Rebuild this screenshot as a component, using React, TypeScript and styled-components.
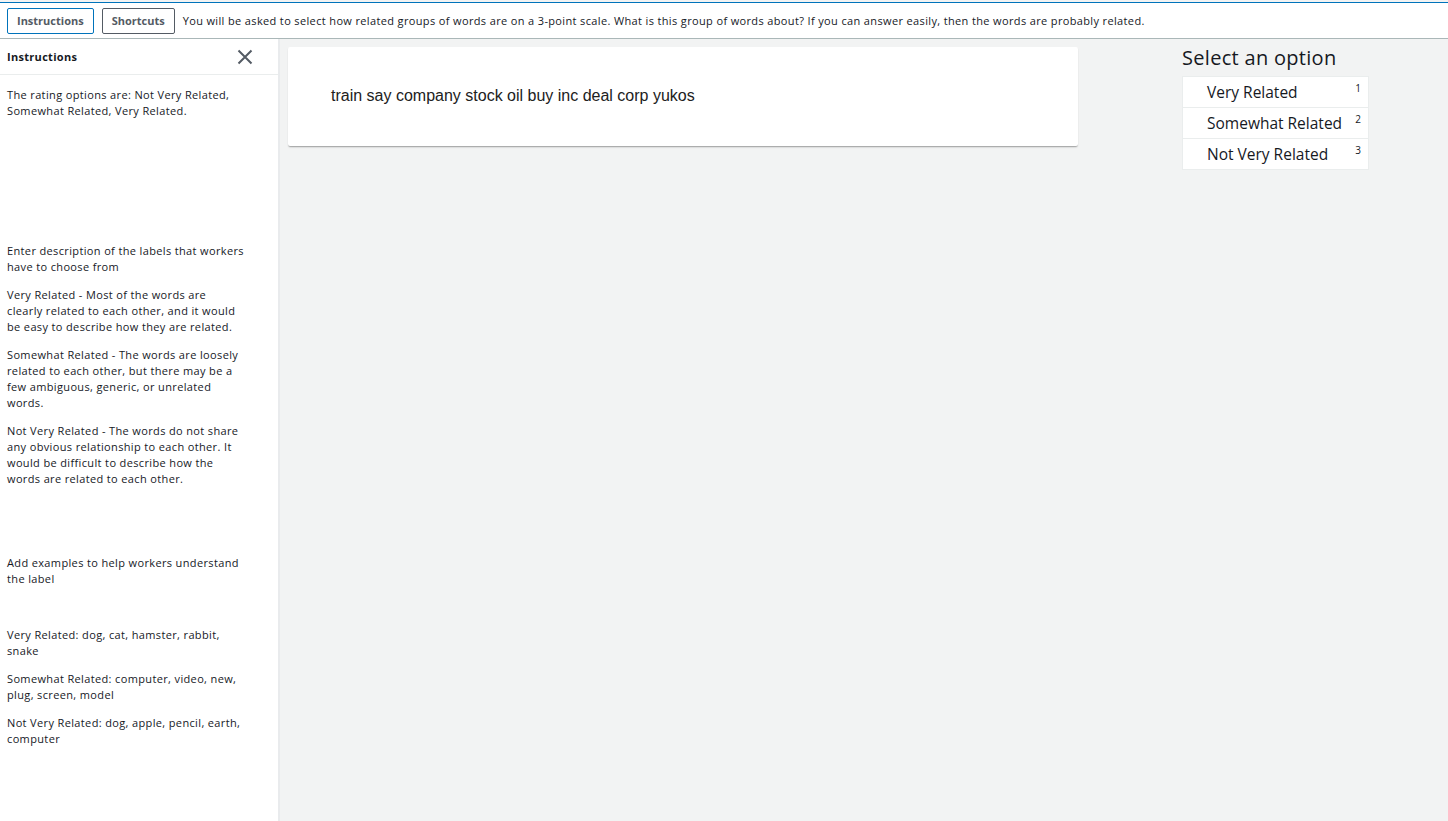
import React from "react";
import styled, { createGlobalStyle } from "styled-components";

const Global = createGlobalStyle`
  html, body { margin: 0; padding: 0; background: #f2f3f3; }
  body { font-family: "Open Sans", "Noto Sans", sans-serif; color: #16191f; }
  #root { min-height: 821px; }
`;

const Page = styled.div`
  display: flex;
  flex-direction: column;
  height: 821px;
  overflow: hidden;
`;

const TopBar = styled.div`
  display: flex;
  align-items: center;
  gap: 8px;
  height: 35px;
  padding: 0 7px;
  margin-top: 2px;
  background: #fff;
  border-top: 1px solid #0073bb;
  border-bottom: 1px solid #aab7b8;
  flex-shrink: 0;
`;

const TopButton = styled.button<{ $active?: boolean }>`
  height: 26px;
  padding: 0 9px;
  background: #fff;
  border: 1px solid ${(p) => (p.$active ? "#0073bb" : "#545b64")};
  border-radius: 2px;
  color: #545b64;
  font-family: inherit;
  font-size: 11px;
  font-weight: 700;
  cursor: pointer;
`;

const TopText = styled.span`
  font-size: 11px;
  letter-spacing: 0.36px;
  color: #16191f;
  white-space: nowrap;
`;

const Body = styled.div`
  display: flex;
  flex: 1;
  min-height: 0;
`;

const Sidebar = styled.aside`
  width: 278px;
  flex-shrink: 0;
  background: #fff;
  border-right: 2px solid #e9ebed;
  display: flex;
  flex-direction: column;
`;

const SideHeader = styled.div`
  display: flex;
  align-items: center;
  justify-content: space-between;
  height: 35px;
  padding: 0 24px 0 7px;
  border-bottom: 1px solid #eaeded;
`;

const SideTitle = styled.span`
  font-size: 11px;
  letter-spacing: 0.3px;
  font-weight: 700;
`;

const CloseBtn = styled.button`
  border: none;
  background: none;
  padding: 0;
  width: 18px;
  height: 18px;
  display: flex;
  align-items: center;
  justify-content: center;
  cursor: pointer;
`;

const SideContent = styled.div`
  width: 237px;
  padding: 12px 0 0 7px;
  font-size: 11px;
  letter-spacing: 0.36px;
  line-height: 16px;
`;

const Para = styled.p<{ $gap?: number }>`
  margin: 0 0 ${(p) => p.$gap ?? 12}px 0;
`;

const Main = styled.main`
  flex: 1;
  display: flex;
  align-items: flex-start;
  padding: 8px 0 0 8px;
`;

const Card = styled.div`
  width: 790px;
  height: 99px;
  background: #fff;
  border-radius: 2px;
  box-shadow: 0 1px 1px rgba(0, 0, 0, 0.14), 0 2px 2px -1px rgba(0, 0, 0, 0.25);
  display: flex;
  align-items: center;
  padding: 0 0 2px 43px;
  box-sizing: border-box;
  font-family: "Liberation Sans", Arial, sans-serif;
  font-size: 16px;
  color: #212121;
`;

const OptionsPanel = styled.div`
  margin-left: 104px;
  display: flex;
  flex-direction: column;
`;

const PanelTitle = styled.h2`
  margin: 0 0 7px 0;
  font-size: 20px;
  letter-spacing: 0.3px;
  font-weight: 500;
  line-height: 22px;
  color: #16191f;
`;

const OptionList = styled.div`
  width: 187px;
  background: #fff;
  border: 1px solid #eaeded;
  box-sizing: border-box;
`;

const Option = styled.div`
  position: relative;
  height: 30px;
  box-sizing: border-box;
  display: flex;
  align-items: center;
  padding: 0 0 0 24px;
  font-size: 15.5px;
  color: #16191f;
  & + & {
    height: 31px;
    border-top: 1px solid #eaeded;
  }
`;

const Key = styled.sup`
  position: absolute;
  right: 7px;
  top: 6px;
  font-size: 10px;
  line-height: 10px;
`;

const options = ["Very Related", "Somewhat Related", "Not Very Related"];

export default function App() {
  return (
    <>
      <Global />
      <Page>
        <TopBar>
          <TopButton $active>Instructions</TopButton>
          <TopButton>Shortcuts</TopButton>
          <TopText>
            You will be asked to select how related groups of words are on a 3-point scale. What is this group of words about? If you can answer easily, then the words are probably related.
          </TopText>
        </TopBar>
        <Body>
          <Sidebar>
            <SideHeader>
              <SideTitle>Instructions</SideTitle>
              <CloseBtn aria-label="Close">
                <svg width="16" height="16" viewBox="0 0 16 16">
                  <path d="M1.5 1.5 L14.5 14.5 M14.5 1.5 L1.5 14.5" stroke="#545b64" strokeWidth="2" fill="none" />
                </svg>
              </CloseBtn>
            </SideHeader>
            <SideContent>
              <Para $gap={124}>
                The rating options are: Not Very Related, Somewhat Related, Very Related.
              </Para>
              <Para>Enter description of the labels that workers have to choose from</Para>
              <Para>
                Very Related - Most of the words are clearly related to each other, and it would be easy to describe how they are related.
              </Para>
              <Para>
                Somewhat Related - The words are loosely related to each other, but there may be a few ambiguous, generic, or unrelated words.
              </Para>
              <Para $gap={68}>
                Not Very Related - The words do not share any obvious relationship to each other. It would be difficult to describe how the words are related to each other.
              </Para>
              <Para $gap={40}>Add examples to help workers understand the label</Para>
              <Para>Very Related: dog, cat, hamster, rabbit, snake</Para>
              <Para>Somewhat Related: computer, video, new, plug, screen, model</Para>
              <Para>Not Very Related: dog, apple, pencil, earth, computer</Para>
            </SideContent>
          </Sidebar>
          <Main>
            <Card>train say company stock oil buy inc deal corp yukos</Card>
            <OptionsPanel>
              <PanelTitle>Select an option</PanelTitle>
              <OptionList>
                {options.map((o, i) => (
                  <Option key={o}>
                    {o}
                    <Key>{i + 1}</Key>
                  </Option>
                ))}
              </OptionList>
            </OptionsPanel>
          </Main>
        </Body>
      </Page>
    </>
  );
}
